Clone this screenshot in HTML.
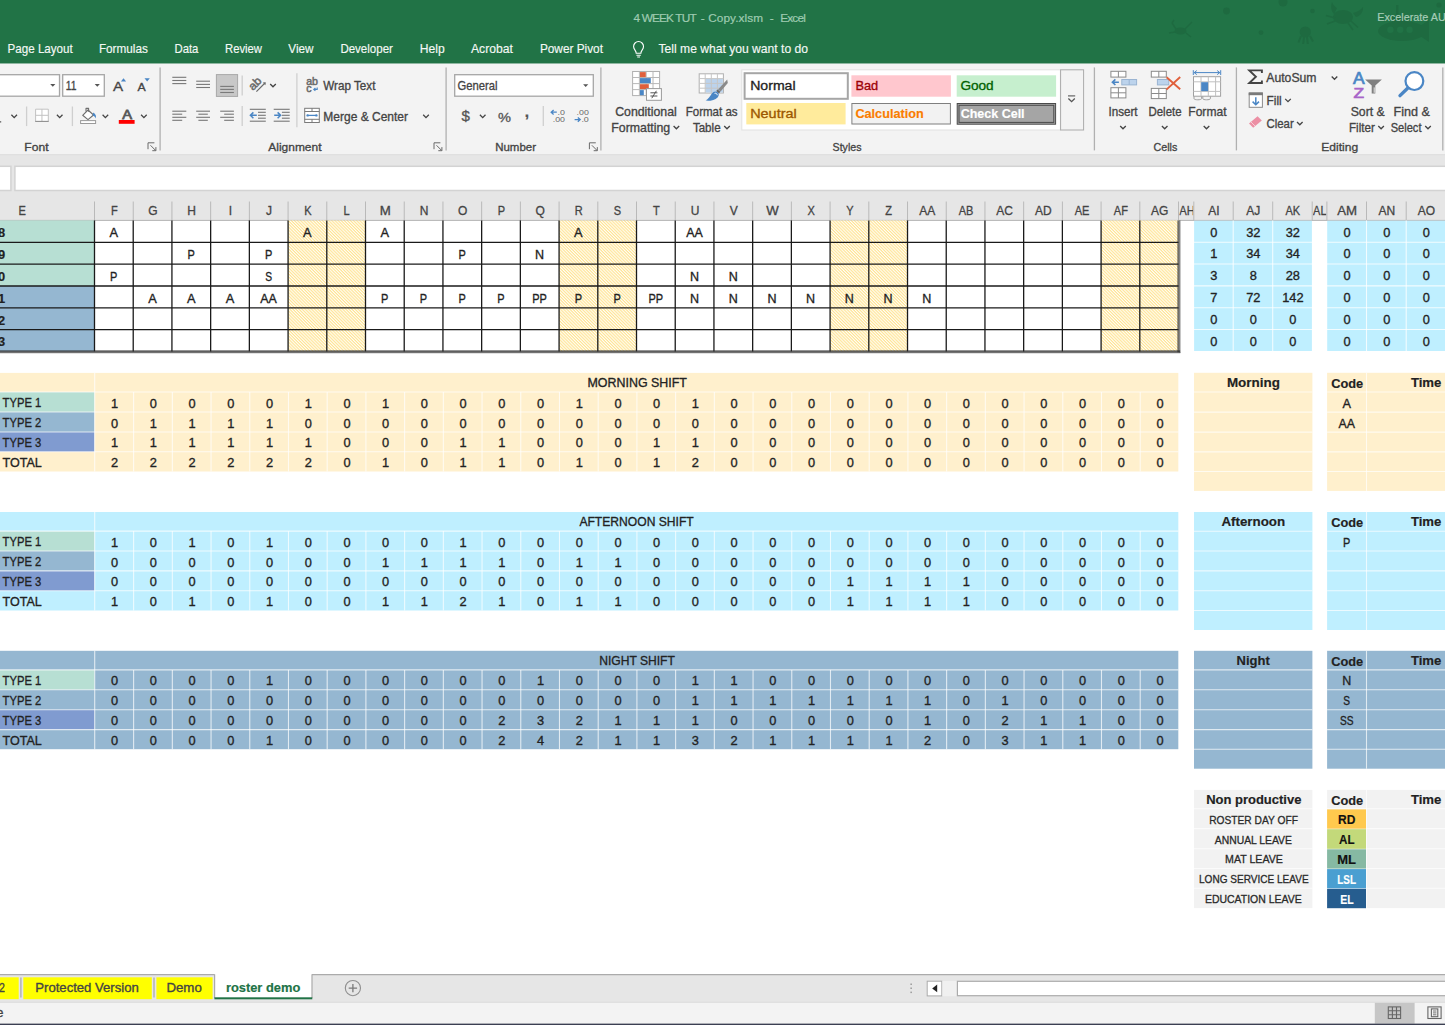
<!DOCTYPE html>
<html lang="en"><head><meta charset="utf-8"><title>4 WEEK TUT - Copy.xlsm - Excel</title>
<style>html,body{margin:0;padding:0;background:#fff;overflow:hidden}svg{display:block;font-family:"Liberation Sans",sans-serif}text{white-space:pre}</style></head>
<body>
<svg width="1445" height="1025" viewBox="0 0 1445 1025">
<rect x="0" y="190.5" width="1445" height="783.7" fill="#fff"/>
<rect x="0" y="190.8" width="1445" height="29.6" fill="#e6e6e6"/>
<line x1="0" y1="220.4" x2="1445" y2="220.4" stroke="#b4b4b4" stroke-width="1"/>
<g font-size="12.5" fill="#444" stroke="#444" stroke-width=".3" text-anchor="middle">
<text x="22.2" y="215.1" transform="translate(22.2 0) scale(0.88 1) translate(-22.2 0)">E</text>
<text x="114.26" y="215.1" transform="translate(114.26 0) scale(0.88 1) translate(-114.26 0)">F</text>
<text x="152.97" y="215.1" transform="translate(152.97 0) scale(0.96 1) translate(-152.97 0)">G</text>
<text x="191.69" y="215.1" transform="translate(191.69 0) scale(0.96 1) translate(-191.69 0)">H</text>
<text x="230.4" y="215.1" transform="translate(230.4 0) scale(0.96 1) translate(-230.4 0)">I</text>
<text x="269.12" y="215.1" transform="translate(269.12 0) scale(0.96 1) translate(-269.12 0)">J</text>
<text x="307.83" y="215.1" transform="translate(307.83 0) scale(0.88 1) translate(-307.83 0)">K</text>
<text x="346.55" y="215.1" transform="translate(346.55 0) scale(0.88 1) translate(-346.55 0)">L</text>
<text x="385.26" y="215.1" transform="translate(385.26 0) scale(1.06 1) translate(-385.26 0)">M</text>
<text x="423.98" y="215.1" transform="translate(423.98 0) scale(0.96 1) translate(-423.98 0)">N</text>
<text x="462.69" y="215.1" transform="translate(462.69 0) scale(0.96 1) translate(-462.69 0)">O</text>
<text x="501.41" y="215.1" transform="translate(501.41 0) scale(0.88 1) translate(-501.41 0)">P</text>
<text x="540.12" y="215.1" transform="translate(540.12 0) scale(0.96 1) translate(-540.12 0)">Q</text>
<text x="578.84" y="215.1" transform="translate(578.84 0) scale(0.88 1) translate(-578.84 0)">R</text>
<text x="617.55" y="215.1" transform="translate(617.55 0) scale(0.88 1) translate(-617.55 0)">S</text>
<text x="656.27" y="215.1" transform="translate(656.27 0) scale(0.88 1) translate(-656.27 0)">T</text>
<text x="694.98" y="215.1" transform="translate(694.98 0) scale(0.96 1) translate(-694.98 0)">U</text>
<text x="733.7" y="215.1" transform="translate(733.7 0) scale(0.96 1) translate(-733.7 0)">V</text>
<text x="772.41" y="215.1" transform="translate(772.41 0) scale(1.06 1) translate(-772.41 0)">W</text>
<text x="811.13" y="215.1" transform="translate(811.13 0) scale(0.88 1) translate(-811.13 0)">X</text>
<text x="849.84" y="215.1" transform="translate(849.84 0) scale(0.88 1) translate(-849.84 0)">Y</text>
<text x="888.56" y="215.1" transform="translate(888.56 0) scale(0.88 1) translate(-888.56 0)">Z</text>
<text x="927.27" y="215.1" transform="translate(927.27 0) scale(0.96 1) translate(-927.27 0)">AA</text>
<text x="965.99" y="215.1" transform="translate(965.99 0) scale(0.88 1) translate(-965.99 0)">AB</text>
<text x="1004.7" y="215.1" transform="translate(1004.7 0) scale(0.96 1) translate(-1004.7 0)">AC</text>
<text x="1043.42" y="215.1" transform="translate(1043.42 0) scale(0.96 1) translate(-1043.42 0)">AD</text>
<text x="1082.13" y="215.1" transform="translate(1082.13 0) scale(0.88 1) translate(-1082.13 0)">AE</text>
<text x="1120.85" y="215.1" transform="translate(1120.85 0) scale(0.88 1) translate(-1120.85 0)">AF</text>
<text x="1159.56" y="215.1" transform="translate(1159.56 0) scale(0.96 1) translate(-1159.56 0)">AG</text>
<text x="1213.9" y="215.1" transform="translate(1213.9 0) scale(0.96 1) translate(-1213.9 0)">AI</text>
<text x="1253.35" y="215.1" transform="translate(1253.35 0) scale(0.96 1) translate(-1253.35 0)">AJ</text>
<text x="1292.85" y="215.1" transform="translate(1292.85 0) scale(0.88 1) translate(-1292.85 0)">AK</text>
<text x="1347.1" y="215.1" transform="translate(1347.1 0) scale(1.06 1) translate(-1347.1 0)">AM</text>
<text x="1386.75" y="215.1" transform="translate(1386.75 0) scale(0.96 1) translate(-1386.75 0)">AN</text>
<text x="1426.4" y="215.1" transform="translate(1426.4 0) scale(0.96 1) translate(-1426.4 0)">AO</text>
</g>
<clipPath id="cAH"><rect x="1179.4" y="200" width="13.8" height="20"/></clipPath>
<clipPath id="cAL"><rect x="1312.8" y="200" width="13.6" height="20"/></clipPath>
<g font-size="12.5" fill="#444" stroke="#444" stroke-width=".3">
<text x="1179.3" y="215.1" textLength="15.6" lengthAdjust="spacingAndGlyphs" clip-path="url(#cAH)">AH</text>
<text x="1313.1" y="215.1" textLength="13.4" lengthAdjust="spacingAndGlyphs" clip-path="url(#cAL)">AL</text>
</g>
<g stroke="#b9b9b9" stroke-width="1">
<line x1="94.5" y1="201.5" x2="94.5" y2="220.4"/>
<line x1="133.22" y1="201.5" x2="133.22" y2="220.4"/>
<line x1="171.93" y1="201.5" x2="171.93" y2="220.4"/>
<line x1="210.65" y1="201.5" x2="210.65" y2="220.4"/>
<line x1="249.36" y1="201.5" x2="249.36" y2="220.4"/>
<line x1="288.08" y1="201.5" x2="288.08" y2="220.4"/>
<line x1="326.79" y1="201.5" x2="326.79" y2="220.4"/>
<line x1="365.5" y1="201.5" x2="365.5" y2="220.4"/>
<line x1="404.22" y1="201.5" x2="404.22" y2="220.4"/>
<line x1="442.94" y1="201.5" x2="442.94" y2="220.4"/>
<line x1="481.65" y1="201.5" x2="481.65" y2="220.4"/>
<line x1="520.37" y1="201.5" x2="520.37" y2="220.4"/>
<line x1="559.08" y1="201.5" x2="559.08" y2="220.4"/>
<line x1="597.8" y1="201.5" x2="597.8" y2="220.4"/>
<line x1="636.51" y1="201.5" x2="636.51" y2="220.4"/>
<line x1="675.23" y1="201.5" x2="675.23" y2="220.4"/>
<line x1="713.94" y1="201.5" x2="713.94" y2="220.4"/>
<line x1="752.66" y1="201.5" x2="752.66" y2="220.4"/>
<line x1="791.37" y1="201.5" x2="791.37" y2="220.4"/>
<line x1="830.09" y1="201.5" x2="830.09" y2="220.4"/>
<line x1="868.8" y1="201.5" x2="868.8" y2="220.4"/>
<line x1="907.52" y1="201.5" x2="907.52" y2="220.4"/>
<line x1="946.23" y1="201.5" x2="946.23" y2="220.4"/>
<line x1="984.95" y1="201.5" x2="984.95" y2="220.4"/>
<line x1="1023.66" y1="201.5" x2="1023.66" y2="220.4"/>
<line x1="1062.38" y1="201.5" x2="1062.38" y2="220.4"/>
<line x1="1101.09" y1="201.5" x2="1101.09" y2="220.4"/>
<line x1="1139.81" y1="201.5" x2="1139.81" y2="220.4"/>
<line x1="1178.52" y1="201.5" x2="1178.52" y2="220.4"/>
<line x1="1193.8" y1="201.5" x2="1193.8" y2="220.4"/>
<line x1="1233.2" y1="201.5" x2="1233.2" y2="220.4"/>
<line x1="1272.7" y1="201.5" x2="1272.7" y2="220.4"/>
<line x1="1312.2" y1="201.5" x2="1312.2" y2="220.4"/>
<line x1="1326.9" y1="201.5" x2="1326.9" y2="220.4"/>
<line x1="1366.5" y1="201.5" x2="1366.5" y2="220.4"/>
<line x1="1406.2" y1="201.5" x2="1406.2" y2="220.4"/>
</g>
<rect x="0" y="220.4" width="94.5" height="65.49" fill="#b7dfd3"/>
<rect x="0" y="285.89" width="94.5" height="65.49" fill="#95b7d1"/>
<defs><pattern id="hat" width="2.2" height="2.2" patternUnits="userSpaceOnUse" patternTransform="rotate(45)"><rect width="2.2" height="2.2" fill="#fffef6"/><rect width="2.2" height="1.1" fill="#ffe392"/></pattern></defs>
<rect x="288.08" y="220.4" width="77.43" height="130.98" fill="url(#hat)"/>
<rect x="559.08" y="220.4" width="77.43" height="130.98" fill="url(#hat)"/>
<rect x="830.09" y="220.4" width="77.43" height="130.98" fill="url(#hat)"/>
<rect x="1101.09" y="220.4" width="77.43" height="130.98" fill="url(#hat)"/>
<g stroke="#1a1a1a" stroke-width="1.3">
<line x1="0" y1="242.33" x2="1178.52" y2="242.33"/>
<line x1="0" y1="264.16" x2="1178.52" y2="264.16"/>
<line x1="0" y1="285.99" x2="1178.52" y2="285.99"/>
<line x1="0" y1="307.82" x2="1178.52" y2="307.82"/>
<line x1="0" y1="329.65" x2="1178.52" y2="329.65"/>
<line x1="94.5" y1="220.4" x2="94.5" y2="351.38"/>
<line x1="133.22" y1="220.4" x2="133.22" y2="351.38"/>
<line x1="171.93" y1="220.4" x2="171.93" y2="351.38"/>
<line x1="210.65" y1="220.4" x2="210.65" y2="351.38"/>
<line x1="249.36" y1="220.4" x2="249.36" y2="351.38"/>
<line x1="288.08" y1="220.4" x2="288.08" y2="351.38"/>
<line x1="326.79" y1="220.4" x2="326.79" y2="351.38"/>
<line x1="365.5" y1="220.4" x2="365.5" y2="351.38"/>
<line x1="404.22" y1="220.4" x2="404.22" y2="351.38"/>
<line x1="442.94" y1="220.4" x2="442.94" y2="351.38"/>
<line x1="481.65" y1="220.4" x2="481.65" y2="351.38"/>
<line x1="520.37" y1="220.4" x2="520.37" y2="351.38"/>
<line x1="559.08" y1="220.4" x2="559.08" y2="351.38"/>
<line x1="597.8" y1="220.4" x2="597.8" y2="351.38"/>
<line x1="636.51" y1="220.4" x2="636.51" y2="351.38"/>
<line x1="675.23" y1="220.4" x2="675.23" y2="351.38"/>
<line x1="713.94" y1="220.4" x2="713.94" y2="351.38"/>
<line x1="752.66" y1="220.4" x2="752.66" y2="351.38"/>
<line x1="791.37" y1="220.4" x2="791.37" y2="351.38"/>
<line x1="830.09" y1="220.4" x2="830.09" y2="351.38"/>
<line x1="868.8" y1="220.4" x2="868.8" y2="351.38"/>
<line x1="907.52" y1="220.4" x2="907.52" y2="351.38"/>
<line x1="946.23" y1="220.4" x2="946.23" y2="351.38"/>
<line x1="984.95" y1="220.4" x2="984.95" y2="351.38"/>
<line x1="1023.66" y1="220.4" x2="1023.66" y2="351.38"/>
<line x1="1062.38" y1="220.4" x2="1062.38" y2="351.38"/>
<line x1="1101.09" y1="220.4" x2="1101.09" y2="351.38"/>
<line x1="1139.81" y1="220.4" x2="1139.81" y2="351.38"/>
</g>
<line x1="1178.12" y1="220.4" x2="1178.12" y2="352.58" stroke="#2a2a2a" stroke-width="1.1"/>
<line x1="1179.82" y1="220.4" x2="1179.82" y2="352.98" stroke="#4a4a4a" stroke-width="1"/>
<line x1="0" y1="351.08" x2="1180.12" y2="351.08" stroke="#2a2a2a" stroke-width="1.2"/>
<line x1="0" y1="352.68" x2="1180.32" y2="352.68" stroke="#555" stroke-width="1"/>
<g font-size="12.9" font-weight="bold" fill="#222" stroke="#222" stroke-width=".15" text-anchor="end">
<text x="5.2" y="237.33">18</text>
<text x="5.2" y="259.16">19</text>
<text x="5.2" y="280.99">20</text>
<text x="5.2" y="302.82">21</text>
<text x="5.2" y="324.65">22</text>
<text x="5.2" y="346.48">23</text>
</g>
<g font-size="12.8" fill="#222" stroke="#222" stroke-width=".32" text-anchor="middle">
<text x="113.76" y="237.43" transform="translate(113.76 0) scale(1 1) translate(-113.76 0)">A</text>
<text x="307.33" y="237.43" transform="translate(307.33 0) scale(1 1) translate(-307.33 0)">A</text>
<text x="384.76" y="237.43" transform="translate(384.76 0) scale(1 1) translate(-384.76 0)">A</text>
<text x="578.34" y="237.43" transform="translate(578.34 0) scale(1 1) translate(-578.34 0)">A</text>
<text x="694.48" y="237.43" transform="translate(694.48 0) scale(0.97 1) translate(-694.48 0)">AA</text>
<text x="191.19" y="259.26" transform="translate(191.19 0) scale(0.86 1) translate(-191.19 0)">P</text>
<text x="268.62" y="259.26" transform="translate(268.62 0) scale(0.86 1) translate(-268.62 0)">P</text>
<text x="462.19" y="259.26" transform="translate(462.19 0) scale(0.86 1) translate(-462.19 0)">P</text>
<text x="539.62" y="259.26" transform="translate(539.62 0) scale(0.98 1) translate(-539.62 0)">N</text>
<text x="113.76" y="281.09" transform="translate(113.76 0) scale(0.86 1) translate(-113.76 0)">P</text>
<text x="268.62" y="281.09" transform="translate(268.62 0) scale(0.8 1) translate(-268.62 0)">S</text>
<text x="694.48" y="281.09" transform="translate(694.48 0) scale(0.98 1) translate(-694.48 0)">N</text>
<text x="733.2" y="281.09" transform="translate(733.2 0) scale(0.98 1) translate(-733.2 0)">N</text>
<text x="152.47" y="302.92" transform="translate(152.47 0) scale(1 1) translate(-152.47 0)">A</text>
<text x="191.19" y="302.92" transform="translate(191.19 0) scale(1 1) translate(-191.19 0)">A</text>
<text x="229.9" y="302.92" transform="translate(229.9 0) scale(1 1) translate(-229.9 0)">A</text>
<text x="268.62" y="302.92" transform="translate(268.62 0) scale(0.97 1) translate(-268.62 0)">AA</text>
<text x="384.76" y="302.92" transform="translate(384.76 0) scale(0.86 1) translate(-384.76 0)">P</text>
<text x="423.48" y="302.92" transform="translate(423.48 0) scale(0.86 1) translate(-423.48 0)">P</text>
<text x="462.19" y="302.92" transform="translate(462.19 0) scale(0.86 1) translate(-462.19 0)">P</text>
<text x="500.91" y="302.92" transform="translate(500.91 0) scale(0.86 1) translate(-500.91 0)">P</text>
<text x="539.62" y="302.92" transform="translate(539.62 0) scale(0.86 1) translate(-539.62 0)">PP</text>
<text x="578.34" y="302.92" transform="translate(578.34 0) scale(0.86 1) translate(-578.34 0)">P</text>
<text x="617.05" y="302.92" transform="translate(617.05 0) scale(0.86 1) translate(-617.05 0)">P</text>
<text x="655.77" y="302.92" transform="translate(655.77 0) scale(0.86 1) translate(-655.77 0)">PP</text>
<text x="694.48" y="302.92" transform="translate(694.48 0) scale(0.98 1) translate(-694.48 0)">N</text>
<text x="733.2" y="302.92" transform="translate(733.2 0) scale(0.98 1) translate(-733.2 0)">N</text>
<text x="771.91" y="302.92" transform="translate(771.91 0) scale(0.98 1) translate(-771.91 0)">N</text>
<text x="810.63" y="302.92" transform="translate(810.63 0) scale(0.98 1) translate(-810.63 0)">N</text>
<text x="849.34" y="302.92" transform="translate(849.34 0) scale(0.98 1) translate(-849.34 0)">N</text>
<text x="888.06" y="302.92" transform="translate(888.06 0) scale(0.98 1) translate(-888.06 0)">N</text>
<text x="926.77" y="302.92" transform="translate(926.77 0) scale(0.98 1) translate(-926.77 0)">N</text>
</g>
<rect x="1194.1" y="220.7" width="117.8" height="130.28" fill="#bfefff"/>
<rect x="1327.2" y="220.7" width="118.5" height="130.28" fill="#bfefff"/>
<g stroke="#fff" stroke-width="1.1" stroke-opacity=".8">
<line x1="1193.8" y1="242.23" x2="1312.2" y2="242.23"/>
<line x1="1326.9" y1="242.23" x2="1445" y2="242.23"/>
<line x1="1193.8" y1="264.06" x2="1312.2" y2="264.06"/>
<line x1="1326.9" y1="264.06" x2="1445" y2="264.06"/>
<line x1="1193.8" y1="285.89" x2="1312.2" y2="285.89"/>
<line x1="1326.9" y1="285.89" x2="1445" y2="285.89"/>
<line x1="1193.8" y1="307.72" x2="1312.2" y2="307.72"/>
<line x1="1326.9" y1="307.72" x2="1445" y2="307.72"/>
<line x1="1193.8" y1="329.55" x2="1312.2" y2="329.55"/>
<line x1="1326.9" y1="329.55" x2="1445" y2="329.55"/>
<line x1="1233.2" y1="220.4" x2="1233.2" y2="351.38"/>
<line x1="1272.7" y1="220.4" x2="1272.7" y2="351.38"/>
<line x1="1366.5" y1="220.4" x2="1366.5" y2="351.38"/>
<line x1="1406.2" y1="220.4" x2="1406.2" y2="351.38"/>
</g>
<g font-size="12.8" fill="#222" stroke="#222" stroke-width=".32" text-anchor="middle">
<text x="1213.9" y="236.53">0</text>
<text x="1253.35" y="236.53">32</text>
<text x="1292.85" y="236.53">32</text>
<text x="1347.1" y="236.53">0</text>
<text x="1386.75" y="236.53">0</text>
<text x="1426.4" y="236.53">0</text>
<text x="1213.9" y="258.36">1</text>
<text x="1253.35" y="258.36">34</text>
<text x="1292.85" y="258.36">34</text>
<text x="1347.1" y="258.36">0</text>
<text x="1386.75" y="258.36">0</text>
<text x="1426.4" y="258.36">0</text>
<text x="1213.9" y="280.19">3</text>
<text x="1253.35" y="280.19">8</text>
<text x="1292.85" y="280.19">28</text>
<text x="1347.1" y="280.19">0</text>
<text x="1386.75" y="280.19">0</text>
<text x="1426.4" y="280.19">0</text>
<text x="1213.9" y="302.02">7</text>
<text x="1253.35" y="302.02">72</text>
<text x="1292.85" y="302.02">142</text>
<text x="1347.1" y="302.02">0</text>
<text x="1386.75" y="302.02">0</text>
<text x="1426.4" y="302.02">0</text>
<text x="1213.9" y="323.85">0</text>
<text x="1253.35" y="323.85">0</text>
<text x="1292.85" y="323.85">0</text>
<text x="1347.1" y="323.85">0</text>
<text x="1386.75" y="323.85">0</text>
<text x="1426.4" y="323.85">0</text>
<text x="1213.9" y="345.68">0</text>
<text x="1253.35" y="345.68">0</text>
<text x="1292.85" y="345.68">0</text>
<text x="1347.1" y="345.68">0</text>
<text x="1386.75" y="345.68">0</text>
<text x="1426.4" y="345.68">0</text>
</g>
<rect x="0" y="372.9" width="1178.32" height="98.6" fill="#fff0cd"/>
<rect x="0" y="392" width="94.5" height="20" fill="#b7dfd3"/>
<rect x="0" y="412" width="94.5" height="20" fill="#95b7d1"/>
<rect x="0" y="432" width="94.5" height="19.8" fill="#809bd0"/>
<g stroke="#fff" stroke-width="1.1" stroke-opacity=".72">
<line x1="0" y1="392" x2="1178.52" y2="392"/>
<line x1="0" y1="412" x2="1178.52" y2="412"/>
<line x1="0" y1="432" x2="1178.52" y2="432"/>
<line x1="0" y1="451.8" x2="1178.52" y2="451.8"/>
<line x1="94.7" y1="372.9" x2="94.7" y2="471.5"/>
<line x1="133.62" y1="392" x2="133.62" y2="471.5"/>
<line x1="172.33" y1="392" x2="172.33" y2="471.5"/>
<line x1="211.05" y1="392" x2="211.05" y2="471.5"/>
<line x1="249.76" y1="392" x2="249.76" y2="471.5"/>
<line x1="288.48" y1="392" x2="288.48" y2="471.5"/>
<line x1="327.19" y1="392" x2="327.19" y2="471.5"/>
<line x1="365.9" y1="392" x2="365.9" y2="471.5"/>
<line x1="404.62" y1="392" x2="404.62" y2="471.5"/>
<line x1="443.34" y1="392" x2="443.34" y2="471.5"/>
<line x1="482.05" y1="392" x2="482.05" y2="471.5"/>
<line x1="520.76" y1="392" x2="520.76" y2="471.5"/>
<line x1="559.48" y1="392" x2="559.48" y2="471.5"/>
<line x1="598.2" y1="392" x2="598.2" y2="471.5"/>
<line x1="636.91" y1="392" x2="636.91" y2="471.5"/>
<line x1="675.62" y1="392" x2="675.62" y2="471.5"/>
<line x1="714.34" y1="392" x2="714.34" y2="471.5"/>
<line x1="753.06" y1="392" x2="753.06" y2="471.5"/>
<line x1="791.77" y1="392" x2="791.77" y2="471.5"/>
<line x1="830.49" y1="392" x2="830.49" y2="471.5"/>
<line x1="869.2" y1="392" x2="869.2" y2="471.5"/>
<line x1="907.92" y1="392" x2="907.92" y2="471.5"/>
<line x1="946.63" y1="392" x2="946.63" y2="471.5"/>
<line x1="985.35" y1="392" x2="985.35" y2="471.5"/>
<line x1="1024.06" y1="392" x2="1024.06" y2="471.5"/>
<line x1="1062.78" y1="392" x2="1062.78" y2="471.5"/>
<line x1="1101.49" y1="392" x2="1101.49" y2="471.5"/>
<line x1="1140.21" y1="392" x2="1140.21" y2="471.5"/>
</g>
<text x="587.5" y="387.1" font-size="12.7" fill="#222" stroke="#222" stroke-width="0.32" textLength="99.4" lengthAdjust="spacingAndGlyphs">MORNING SHIFT</text>
<g font-size="12.9" fill="#222" stroke="#222" stroke-width=".32">
<text x="2.6" y="407.4" textLength="38.6" lengthAdjust="spacingAndGlyphs">TYPE 1</text>
<text x="2.6" y="427.4" textLength="38.6" lengthAdjust="spacingAndGlyphs">TYPE 2</text>
<text x="2.6" y="447.2" textLength="38.6" lengthAdjust="spacingAndGlyphs">TYPE 3</text>
<text x="2.6" y="466.9" textLength="39.2" lengthAdjust="spacingAndGlyphs">TOTAL</text>
</g>
<g font-size="12.8" fill="#222" stroke="#222" stroke-width=".32" text-anchor="middle">
<text x="114.66" y="407.6">1</text>
<text x="153.37" y="407.6">0</text>
<text x="192.09" y="407.6">0</text>
<text x="230.8" y="407.6">0</text>
<text x="269.52" y="407.6">0</text>
<text x="308.23" y="407.6">1</text>
<text x="346.95" y="407.6">0</text>
<text x="385.66" y="407.6">1</text>
<text x="424.38" y="407.6">0</text>
<text x="463.09" y="407.6">0</text>
<text x="501.81" y="407.6">0</text>
<text x="540.52" y="407.6">0</text>
<text x="579.24" y="407.6">1</text>
<text x="617.95" y="407.6">0</text>
<text x="656.67" y="407.6">0</text>
<text x="695.38" y="407.6">1</text>
<text x="734.1" y="407.6">0</text>
<text x="772.81" y="407.6">0</text>
<text x="811.53" y="407.6">0</text>
<text x="850.24" y="407.6">0</text>
<text x="888.96" y="407.6">0</text>
<text x="927.67" y="407.6">0</text>
<text x="966.39" y="407.6">0</text>
<text x="1005.1" y="407.6">0</text>
<text x="1043.82" y="407.6">0</text>
<text x="1082.53" y="407.6">0</text>
<text x="1121.25" y="407.6">0</text>
<text x="1159.96" y="407.6">0</text>
<text x="114.66" y="427.6">0</text>
<text x="153.37" y="427.6">1</text>
<text x="192.09" y="427.6">1</text>
<text x="230.8" y="427.6">1</text>
<text x="269.52" y="427.6">1</text>
<text x="308.23" y="427.6">0</text>
<text x="346.95" y="427.6">0</text>
<text x="385.66" y="427.6">0</text>
<text x="424.38" y="427.6">0</text>
<text x="463.09" y="427.6">0</text>
<text x="501.81" y="427.6">0</text>
<text x="540.52" y="427.6">0</text>
<text x="579.24" y="427.6">0</text>
<text x="617.95" y="427.6">0</text>
<text x="656.67" y="427.6">0</text>
<text x="695.38" y="427.6">0</text>
<text x="734.1" y="427.6">0</text>
<text x="772.81" y="427.6">0</text>
<text x="811.53" y="427.6">0</text>
<text x="850.24" y="427.6">0</text>
<text x="888.96" y="427.6">0</text>
<text x="927.67" y="427.6">0</text>
<text x="966.39" y="427.6">0</text>
<text x="1005.1" y="427.6">0</text>
<text x="1043.82" y="427.6">0</text>
<text x="1082.53" y="427.6">0</text>
<text x="1121.25" y="427.6">0</text>
<text x="1159.96" y="427.6">0</text>
<text x="114.66" y="447.4">1</text>
<text x="153.37" y="447.4">1</text>
<text x="192.09" y="447.4">1</text>
<text x="230.8" y="447.4">1</text>
<text x="269.52" y="447.4">1</text>
<text x="308.23" y="447.4">1</text>
<text x="346.95" y="447.4">0</text>
<text x="385.66" y="447.4">0</text>
<text x="424.38" y="447.4">0</text>
<text x="463.09" y="447.4">1</text>
<text x="501.81" y="447.4">1</text>
<text x="540.52" y="447.4">0</text>
<text x="579.24" y="447.4">0</text>
<text x="617.95" y="447.4">0</text>
<text x="656.67" y="447.4">1</text>
<text x="695.38" y="447.4">1</text>
<text x="734.1" y="447.4">0</text>
<text x="772.81" y="447.4">0</text>
<text x="811.53" y="447.4">0</text>
<text x="850.24" y="447.4">0</text>
<text x="888.96" y="447.4">0</text>
<text x="927.67" y="447.4">0</text>
<text x="966.39" y="447.4">0</text>
<text x="1005.1" y="447.4">0</text>
<text x="1043.82" y="447.4">0</text>
<text x="1082.53" y="447.4">0</text>
<text x="1121.25" y="447.4">0</text>
<text x="1159.96" y="447.4">0</text>
<text x="114.66" y="467.1">2</text>
<text x="153.37" y="467.1">2</text>
<text x="192.09" y="467.1">2</text>
<text x="230.8" y="467.1">2</text>
<text x="269.52" y="467.1">2</text>
<text x="308.23" y="467.1">2</text>
<text x="346.95" y="467.1">0</text>
<text x="385.66" y="467.1">1</text>
<text x="424.38" y="467.1">0</text>
<text x="463.09" y="467.1">1</text>
<text x="501.81" y="467.1">1</text>
<text x="540.52" y="467.1">0</text>
<text x="579.24" y="467.1">1</text>
<text x="617.95" y="467.1">0</text>
<text x="656.67" y="467.1">1</text>
<text x="695.38" y="467.1">2</text>
<text x="734.1" y="467.1">0</text>
<text x="772.81" y="467.1">0</text>
<text x="811.53" y="467.1">0</text>
<text x="850.24" y="467.1">0</text>
<text x="888.96" y="467.1">0</text>
<text x="927.67" y="467.1">0</text>
<text x="966.39" y="467.1">0</text>
<text x="1005.1" y="467.1">0</text>
<text x="1043.82" y="467.1">0</text>
<text x="1082.53" y="467.1">0</text>
<text x="1121.25" y="467.1">0</text>
<text x="1159.96" y="467.1">0</text>
</g>
<rect x="0" y="512" width="1178.32" height="98.5" fill="#bfefff"/>
<rect x="0" y="531.1" width="94.5" height="19.9" fill="#b7dfd3"/>
<rect x="0" y="551" width="94.5" height="19.9" fill="#95b7d1"/>
<rect x="0" y="570.9" width="94.5" height="19.9" fill="#809bd0"/>
<g stroke="#fff" stroke-width="1.1" stroke-opacity=".72">
<line x1="0" y1="531.1" x2="1178.52" y2="531.1"/>
<line x1="0" y1="551" x2="1178.52" y2="551"/>
<line x1="0" y1="570.9" x2="1178.52" y2="570.9"/>
<line x1="0" y1="590.8" x2="1178.52" y2="590.8"/>
<line x1="94.7" y1="512" x2="94.7" y2="610.5"/>
<line x1="133.62" y1="531.1" x2="133.62" y2="610.5"/>
<line x1="172.33" y1="531.1" x2="172.33" y2="610.5"/>
<line x1="211.05" y1="531.1" x2="211.05" y2="610.5"/>
<line x1="249.76" y1="531.1" x2="249.76" y2="610.5"/>
<line x1="288.48" y1="531.1" x2="288.48" y2="610.5"/>
<line x1="327.19" y1="531.1" x2="327.19" y2="610.5"/>
<line x1="365.9" y1="531.1" x2="365.9" y2="610.5"/>
<line x1="404.62" y1="531.1" x2="404.62" y2="610.5"/>
<line x1="443.34" y1="531.1" x2="443.34" y2="610.5"/>
<line x1="482.05" y1="531.1" x2="482.05" y2="610.5"/>
<line x1="520.76" y1="531.1" x2="520.76" y2="610.5"/>
<line x1="559.48" y1="531.1" x2="559.48" y2="610.5"/>
<line x1="598.2" y1="531.1" x2="598.2" y2="610.5"/>
<line x1="636.91" y1="531.1" x2="636.91" y2="610.5"/>
<line x1="675.62" y1="531.1" x2="675.62" y2="610.5"/>
<line x1="714.34" y1="531.1" x2="714.34" y2="610.5"/>
<line x1="753.06" y1="531.1" x2="753.06" y2="610.5"/>
<line x1="791.77" y1="531.1" x2="791.77" y2="610.5"/>
<line x1="830.49" y1="531.1" x2="830.49" y2="610.5"/>
<line x1="869.2" y1="531.1" x2="869.2" y2="610.5"/>
<line x1="907.92" y1="531.1" x2="907.92" y2="610.5"/>
<line x1="946.63" y1="531.1" x2="946.63" y2="610.5"/>
<line x1="985.35" y1="531.1" x2="985.35" y2="610.5"/>
<line x1="1024.06" y1="531.1" x2="1024.06" y2="610.5"/>
<line x1="1062.78" y1="531.1" x2="1062.78" y2="610.5"/>
<line x1="1101.49" y1="531.1" x2="1101.49" y2="610.5"/>
<line x1="1140.21" y1="531.1" x2="1140.21" y2="610.5"/>
</g>
<text x="579.4" y="526.2" font-size="12.7" fill="#222" stroke="#222" stroke-width="0.32" textLength="114.3" lengthAdjust="spacingAndGlyphs">AFTERNOON SHIFT</text>
<g font-size="12.9" fill="#222" stroke="#222" stroke-width=".32">
<text x="2.6" y="546.4" textLength="38.6" lengthAdjust="spacingAndGlyphs">TYPE 1</text>
<text x="2.6" y="566.3" textLength="38.6" lengthAdjust="spacingAndGlyphs">TYPE 2</text>
<text x="2.6" y="586.2" textLength="38.6" lengthAdjust="spacingAndGlyphs">TYPE 3</text>
<text x="2.6" y="605.9" textLength="39.2" lengthAdjust="spacingAndGlyphs">TOTAL</text>
</g>
<g font-size="12.8" fill="#222" stroke="#222" stroke-width=".32" text-anchor="middle">
<text x="114.66" y="546.6">1</text>
<text x="153.37" y="546.6">0</text>
<text x="192.09" y="546.6">1</text>
<text x="230.8" y="546.6">0</text>
<text x="269.52" y="546.6">1</text>
<text x="308.23" y="546.6">0</text>
<text x="346.95" y="546.6">0</text>
<text x="385.66" y="546.6">0</text>
<text x="424.38" y="546.6">0</text>
<text x="463.09" y="546.6">1</text>
<text x="501.81" y="546.6">0</text>
<text x="540.52" y="546.6">0</text>
<text x="579.24" y="546.6">0</text>
<text x="617.95" y="546.6">0</text>
<text x="656.67" y="546.6">0</text>
<text x="695.38" y="546.6">0</text>
<text x="734.1" y="546.6">0</text>
<text x="772.81" y="546.6">0</text>
<text x="811.53" y="546.6">0</text>
<text x="850.24" y="546.6">0</text>
<text x="888.96" y="546.6">0</text>
<text x="927.67" y="546.6">0</text>
<text x="966.39" y="546.6">0</text>
<text x="1005.1" y="546.6">0</text>
<text x="1043.82" y="546.6">0</text>
<text x="1082.53" y="546.6">0</text>
<text x="1121.25" y="546.6">0</text>
<text x="1159.96" y="546.6">0</text>
<text x="114.66" y="566.5">0</text>
<text x="153.37" y="566.5">0</text>
<text x="192.09" y="566.5">0</text>
<text x="230.8" y="566.5">0</text>
<text x="269.52" y="566.5">0</text>
<text x="308.23" y="566.5">0</text>
<text x="346.95" y="566.5">0</text>
<text x="385.66" y="566.5">1</text>
<text x="424.38" y="566.5">1</text>
<text x="463.09" y="566.5">1</text>
<text x="501.81" y="566.5">1</text>
<text x="540.52" y="566.5">0</text>
<text x="579.24" y="566.5">1</text>
<text x="617.95" y="566.5">1</text>
<text x="656.67" y="566.5">0</text>
<text x="695.38" y="566.5">0</text>
<text x="734.1" y="566.5">0</text>
<text x="772.81" y="566.5">0</text>
<text x="811.53" y="566.5">0</text>
<text x="850.24" y="566.5">0</text>
<text x="888.96" y="566.5">0</text>
<text x="927.67" y="566.5">0</text>
<text x="966.39" y="566.5">0</text>
<text x="1005.1" y="566.5">0</text>
<text x="1043.82" y="566.5">0</text>
<text x="1082.53" y="566.5">0</text>
<text x="1121.25" y="566.5">0</text>
<text x="1159.96" y="566.5">0</text>
<text x="114.66" y="586.4">0</text>
<text x="153.37" y="586.4">0</text>
<text x="192.09" y="586.4">0</text>
<text x="230.8" y="586.4">0</text>
<text x="269.52" y="586.4">0</text>
<text x="308.23" y="586.4">0</text>
<text x="346.95" y="586.4">0</text>
<text x="385.66" y="586.4">0</text>
<text x="424.38" y="586.4">0</text>
<text x="463.09" y="586.4">0</text>
<text x="501.81" y="586.4">0</text>
<text x="540.52" y="586.4">0</text>
<text x="579.24" y="586.4">0</text>
<text x="617.95" y="586.4">0</text>
<text x="656.67" y="586.4">0</text>
<text x="695.38" y="586.4">0</text>
<text x="734.1" y="586.4">0</text>
<text x="772.81" y="586.4">0</text>
<text x="811.53" y="586.4">0</text>
<text x="850.24" y="586.4">1</text>
<text x="888.96" y="586.4">1</text>
<text x="927.67" y="586.4">1</text>
<text x="966.39" y="586.4">1</text>
<text x="1005.1" y="586.4">0</text>
<text x="1043.82" y="586.4">0</text>
<text x="1082.53" y="586.4">0</text>
<text x="1121.25" y="586.4">0</text>
<text x="1159.96" y="586.4">0</text>
<text x="114.66" y="606.1">1</text>
<text x="153.37" y="606.1">0</text>
<text x="192.09" y="606.1">1</text>
<text x="230.8" y="606.1">0</text>
<text x="269.52" y="606.1">1</text>
<text x="308.23" y="606.1">0</text>
<text x="346.95" y="606.1">0</text>
<text x="385.66" y="606.1">1</text>
<text x="424.38" y="606.1">1</text>
<text x="463.09" y="606.1">2</text>
<text x="501.81" y="606.1">1</text>
<text x="540.52" y="606.1">0</text>
<text x="579.24" y="606.1">1</text>
<text x="617.95" y="606.1">1</text>
<text x="656.67" y="606.1">0</text>
<text x="695.38" y="606.1">0</text>
<text x="734.1" y="606.1">0</text>
<text x="772.81" y="606.1">0</text>
<text x="811.53" y="606.1">0</text>
<text x="850.24" y="606.1">1</text>
<text x="888.96" y="606.1">1</text>
<text x="927.67" y="606.1">1</text>
<text x="966.39" y="606.1">1</text>
<text x="1005.1" y="606.1">0</text>
<text x="1043.82" y="606.1">0</text>
<text x="1082.53" y="606.1">0</text>
<text x="1121.25" y="606.1">0</text>
<text x="1159.96" y="606.1">0</text>
</g>
<rect x="0" y="650.8" width="1178.32" height="98.4" fill="#95b7d1"/>
<rect x="0" y="669.9" width="94.5" height="19.9" fill="#b7dfd3"/>
<rect x="0" y="689.8" width="94.5" height="19.9" fill="#95b7d1"/>
<rect x="0" y="709.7" width="94.5" height="19.9" fill="#809bd0"/>
<g stroke="#fff" stroke-width="1.1" stroke-opacity=".72">
<line x1="0" y1="669.9" x2="1178.52" y2="669.9"/>
<line x1="0" y1="689.8" x2="1178.52" y2="689.8"/>
<line x1="0" y1="709.7" x2="1178.52" y2="709.7"/>
<line x1="0" y1="729.6" x2="1178.52" y2="729.6"/>
<line x1="94.7" y1="650.8" x2="94.7" y2="749.2"/>
<line x1="133.62" y1="669.9" x2="133.62" y2="749.2"/>
<line x1="172.33" y1="669.9" x2="172.33" y2="749.2"/>
<line x1="211.05" y1="669.9" x2="211.05" y2="749.2"/>
<line x1="249.76" y1="669.9" x2="249.76" y2="749.2"/>
<line x1="288.48" y1="669.9" x2="288.48" y2="749.2"/>
<line x1="327.19" y1="669.9" x2="327.19" y2="749.2"/>
<line x1="365.9" y1="669.9" x2="365.9" y2="749.2"/>
<line x1="404.62" y1="669.9" x2="404.62" y2="749.2"/>
<line x1="443.34" y1="669.9" x2="443.34" y2="749.2"/>
<line x1="482.05" y1="669.9" x2="482.05" y2="749.2"/>
<line x1="520.76" y1="669.9" x2="520.76" y2="749.2"/>
<line x1="559.48" y1="669.9" x2="559.48" y2="749.2"/>
<line x1="598.2" y1="669.9" x2="598.2" y2="749.2"/>
<line x1="636.91" y1="669.9" x2="636.91" y2="749.2"/>
<line x1="675.62" y1="669.9" x2="675.62" y2="749.2"/>
<line x1="714.34" y1="669.9" x2="714.34" y2="749.2"/>
<line x1="753.06" y1="669.9" x2="753.06" y2="749.2"/>
<line x1="791.77" y1="669.9" x2="791.77" y2="749.2"/>
<line x1="830.49" y1="669.9" x2="830.49" y2="749.2"/>
<line x1="869.2" y1="669.9" x2="869.2" y2="749.2"/>
<line x1="907.92" y1="669.9" x2="907.92" y2="749.2"/>
<line x1="946.63" y1="669.9" x2="946.63" y2="749.2"/>
<line x1="985.35" y1="669.9" x2="985.35" y2="749.2"/>
<line x1="1024.06" y1="669.9" x2="1024.06" y2="749.2"/>
<line x1="1062.78" y1="669.9" x2="1062.78" y2="749.2"/>
<line x1="1101.49" y1="669.9" x2="1101.49" y2="749.2"/>
<line x1="1140.21" y1="669.9" x2="1140.21" y2="749.2"/>
</g>
<text x="599.2" y="665" font-size="12.7" fill="#222" stroke="#222" stroke-width="0.32" textLength="75.7" lengthAdjust="spacingAndGlyphs">NIGHT SHIFT</text>
<g font-size="12.9" fill="#222" stroke="#222" stroke-width=".32">
<text x="2.6" y="685.2" textLength="38.6" lengthAdjust="spacingAndGlyphs">TYPE 1</text>
<text x="2.6" y="705.1" textLength="38.6" lengthAdjust="spacingAndGlyphs">TYPE 2</text>
<text x="2.6" y="725" textLength="38.6" lengthAdjust="spacingAndGlyphs">TYPE 3</text>
<text x="2.6" y="744.6" textLength="39.2" lengthAdjust="spacingAndGlyphs">TOTAL</text>
</g>
<g font-size="12.8" fill="#222" stroke="#222" stroke-width=".32" text-anchor="middle">
<text x="114.66" y="685.4">0</text>
<text x="153.37" y="685.4">0</text>
<text x="192.09" y="685.4">0</text>
<text x="230.8" y="685.4">0</text>
<text x="269.52" y="685.4">1</text>
<text x="308.23" y="685.4">0</text>
<text x="346.95" y="685.4">0</text>
<text x="385.66" y="685.4">0</text>
<text x="424.38" y="685.4">0</text>
<text x="463.09" y="685.4">0</text>
<text x="501.81" y="685.4">0</text>
<text x="540.52" y="685.4">1</text>
<text x="579.24" y="685.4">0</text>
<text x="617.95" y="685.4">0</text>
<text x="656.67" y="685.4">0</text>
<text x="695.38" y="685.4">1</text>
<text x="734.1" y="685.4">1</text>
<text x="772.81" y="685.4">0</text>
<text x="811.53" y="685.4">0</text>
<text x="850.24" y="685.4">0</text>
<text x="888.96" y="685.4">0</text>
<text x="927.67" y="685.4">0</text>
<text x="966.39" y="685.4">0</text>
<text x="1005.1" y="685.4">0</text>
<text x="1043.82" y="685.4">0</text>
<text x="1082.53" y="685.4">0</text>
<text x="1121.25" y="685.4">0</text>
<text x="1159.96" y="685.4">0</text>
<text x="114.66" y="705.3">0</text>
<text x="153.37" y="705.3">0</text>
<text x="192.09" y="705.3">0</text>
<text x="230.8" y="705.3">0</text>
<text x="269.52" y="705.3">0</text>
<text x="308.23" y="705.3">0</text>
<text x="346.95" y="705.3">0</text>
<text x="385.66" y="705.3">0</text>
<text x="424.38" y="705.3">0</text>
<text x="463.09" y="705.3">0</text>
<text x="501.81" y="705.3">0</text>
<text x="540.52" y="705.3">0</text>
<text x="579.24" y="705.3">0</text>
<text x="617.95" y="705.3">0</text>
<text x="656.67" y="705.3">0</text>
<text x="695.38" y="705.3">1</text>
<text x="734.1" y="705.3">1</text>
<text x="772.81" y="705.3">1</text>
<text x="811.53" y="705.3">1</text>
<text x="850.24" y="705.3">1</text>
<text x="888.96" y="705.3">1</text>
<text x="927.67" y="705.3">1</text>
<text x="966.39" y="705.3">0</text>
<text x="1005.1" y="705.3">1</text>
<text x="1043.82" y="705.3">0</text>
<text x="1082.53" y="705.3">0</text>
<text x="1121.25" y="705.3">0</text>
<text x="1159.96" y="705.3">0</text>
<text x="114.66" y="725.2">0</text>
<text x="153.37" y="725.2">0</text>
<text x="192.09" y="725.2">0</text>
<text x="230.8" y="725.2">0</text>
<text x="269.52" y="725.2">0</text>
<text x="308.23" y="725.2">0</text>
<text x="346.95" y="725.2">0</text>
<text x="385.66" y="725.2">0</text>
<text x="424.38" y="725.2">0</text>
<text x="463.09" y="725.2">0</text>
<text x="501.81" y="725.2">2</text>
<text x="540.52" y="725.2">3</text>
<text x="579.24" y="725.2">2</text>
<text x="617.95" y="725.2">1</text>
<text x="656.67" y="725.2">1</text>
<text x="695.38" y="725.2">1</text>
<text x="734.1" y="725.2">0</text>
<text x="772.81" y="725.2">0</text>
<text x="811.53" y="725.2">0</text>
<text x="850.24" y="725.2">0</text>
<text x="888.96" y="725.2">0</text>
<text x="927.67" y="725.2">1</text>
<text x="966.39" y="725.2">0</text>
<text x="1005.1" y="725.2">2</text>
<text x="1043.82" y="725.2">1</text>
<text x="1082.53" y="725.2">1</text>
<text x="1121.25" y="725.2">0</text>
<text x="1159.96" y="725.2">0</text>
<text x="114.66" y="744.8">0</text>
<text x="153.37" y="744.8">0</text>
<text x="192.09" y="744.8">0</text>
<text x="230.8" y="744.8">0</text>
<text x="269.52" y="744.8">1</text>
<text x="308.23" y="744.8">0</text>
<text x="346.95" y="744.8">0</text>
<text x="385.66" y="744.8">0</text>
<text x="424.38" y="744.8">0</text>
<text x="463.09" y="744.8">0</text>
<text x="501.81" y="744.8">2</text>
<text x="540.52" y="744.8">4</text>
<text x="579.24" y="744.8">2</text>
<text x="617.95" y="744.8">1</text>
<text x="656.67" y="744.8">1</text>
<text x="695.38" y="744.8">3</text>
<text x="734.1" y="744.8">2</text>
<text x="772.81" y="744.8">1</text>
<text x="811.53" y="744.8">1</text>
<text x="850.24" y="744.8">1</text>
<text x="888.96" y="744.8">1</text>
<text x="927.67" y="744.8">2</text>
<text x="966.39" y="744.8">0</text>
<text x="1005.1" y="744.8">3</text>
<text x="1043.82" y="744.8">1</text>
<text x="1082.53" y="744.8">1</text>
<text x="1121.25" y="744.8">0</text>
<text x="1159.96" y="744.8">0</text>
</g>
<rect x="1194" y="372.8" width="118.4" height="118.1" fill="#fff0cd"/>
<rect x="1327.1" y="372.8" width="118.9" height="118.1" fill="#fff0cd"/>
<g stroke="#fff" stroke-width="1.1" stroke-opacity=".7">
<line x1="1194" y1="392" x2="1312.4" y2="392"/>
<line x1="1327.1" y1="392" x2="1445" y2="392"/>
<line x1="1194" y1="412.1" x2="1312.4" y2="412.1"/>
<line x1="1327.1" y1="412.1" x2="1445" y2="412.1"/>
<line x1="1194" y1="432.1" x2="1312.4" y2="432.1"/>
<line x1="1327.1" y1="432.1" x2="1445" y2="432.1"/>
<line x1="1194" y1="451.9" x2="1312.4" y2="451.9"/>
<line x1="1327.1" y1="451.9" x2="1445" y2="451.9"/>
<line x1="1194" y1="471.5" x2="1312.4" y2="471.5"/>
<line x1="1327.1" y1="471.5" x2="1445" y2="471.5"/>
<line x1="1366.5" y1="372.8" x2="1366.5" y2="490.9"/>
</g>
<text x="1226.9" y="387" font-size="12.7" fill="#222" stroke="#222" stroke-width="0.16" font-weight="bold" textLength="53" lengthAdjust="spacingAndGlyphs">Morning</text>
<text x="1331.2" y="387.8" font-size="12.7" fill="#222" stroke="#222" stroke-width="0.16" font-weight="bold" textLength="32" lengthAdjust="spacingAndGlyphs">Code</text>
<text x="1410.9" y="387" font-size="12.7" fill="#222" stroke="#222" stroke-width="0.16" font-weight="bold" textLength="30.5" lengthAdjust="spacingAndGlyphs">Time</text>
<text x="1346.7" y="407.8" font-size="12.7" fill="#222" stroke="#222" stroke-width="0.32" text-anchor="middle" transform="translate(1346.7 0) scale(1 1) translate(-1346.7 0)">A</text>
<text x="1346.7" y="427.8" font-size="12.7" fill="#222" stroke="#222" stroke-width="0.32" text-anchor="middle" transform="translate(1346.7 0) scale(0.97 1) translate(-1346.7 0)">AA</text>
<rect x="1194" y="512" width="118.4" height="118" fill="#bfefff"/>
<rect x="1327.1" y="512" width="118.9" height="118" fill="#bfefff"/>
<g stroke="#fff" stroke-width="1.1" stroke-opacity=".7">
<line x1="1194" y1="531.2" x2="1312.4" y2="531.2"/>
<line x1="1327.1" y1="531.2" x2="1445" y2="531.2"/>
<line x1="1194" y1="551" x2="1312.4" y2="551"/>
<line x1="1327.1" y1="551" x2="1445" y2="551"/>
<line x1="1194" y1="570.9" x2="1312.4" y2="570.9"/>
<line x1="1327.1" y1="570.9" x2="1445" y2="570.9"/>
<line x1="1194" y1="590.8" x2="1312.4" y2="590.8"/>
<line x1="1327.1" y1="590.8" x2="1445" y2="590.8"/>
<line x1="1194" y1="610.5" x2="1312.4" y2="610.5"/>
<line x1="1327.1" y1="610.5" x2="1445" y2="610.5"/>
<line x1="1366.5" y1="512" x2="1366.5" y2="630"/>
</g>
<text x="1221.4" y="526.2" font-size="12.7" fill="#222" stroke="#222" stroke-width="0.16" font-weight="bold" textLength="63.8" lengthAdjust="spacingAndGlyphs">Afternoon</text>
<text x="1331.2" y="527" font-size="12.7" fill="#222" stroke="#222" stroke-width="0.16" font-weight="bold" textLength="32" lengthAdjust="spacingAndGlyphs">Code</text>
<text x="1410.9" y="526.2" font-size="12.7" fill="#222" stroke="#222" stroke-width="0.16" font-weight="bold" textLength="30.5" lengthAdjust="spacingAndGlyphs">Time</text>
<text x="1346.7" y="546.7" font-size="12.7" fill="#222" stroke="#222" stroke-width="0.32" text-anchor="middle" transform="translate(1346.7 0) scale(0.86 1) translate(-1346.7 0)">P</text>
<rect x="1194" y="650.8" width="118.4" height="117.9" fill="#95b7d1"/>
<rect x="1327.1" y="650.8" width="118.9" height="117.9" fill="#95b7d1"/>
<g stroke="#fff" stroke-width="1.1" stroke-opacity=".7">
<line x1="1194" y1="669.9" x2="1312.4" y2="669.9"/>
<line x1="1327.1" y1="669.9" x2="1445" y2="669.9"/>
<line x1="1194" y1="689.8" x2="1312.4" y2="689.8"/>
<line x1="1327.1" y1="689.8" x2="1445" y2="689.8"/>
<line x1="1194" y1="709.7" x2="1312.4" y2="709.7"/>
<line x1="1327.1" y1="709.7" x2="1445" y2="709.7"/>
<line x1="1194" y1="729.6" x2="1312.4" y2="729.6"/>
<line x1="1327.1" y1="729.6" x2="1445" y2="729.6"/>
<line x1="1194" y1="749.2" x2="1312.4" y2="749.2"/>
<line x1="1327.1" y1="749.2" x2="1445" y2="749.2"/>
<line x1="1366.5" y1="650.8" x2="1366.5" y2="768.7"/>
</g>
<text x="1236.6" y="664.9" font-size="12.7" fill="#222" stroke="#222" stroke-width="0.16" font-weight="bold" textLength="33.2" lengthAdjust="spacingAndGlyphs">Night</text>
<text x="1331.2" y="665.7" font-size="12.7" fill="#222" stroke="#222" stroke-width="0.16" font-weight="bold" textLength="32" lengthAdjust="spacingAndGlyphs">Code</text>
<text x="1410.9" y="664.9" font-size="12.7" fill="#222" stroke="#222" stroke-width="0.16" font-weight="bold" textLength="30.5" lengthAdjust="spacingAndGlyphs">Time</text>
<text x="1346.7" y="685.5" font-size="12.7" fill="#222" stroke="#222" stroke-width="0.32" text-anchor="middle" transform="translate(1346.7 0) scale(0.98 1) translate(-1346.7 0)">N</text>
<text x="1346.7" y="705.4" font-size="12.7" fill="#222" stroke="#222" stroke-width="0.32" text-anchor="middle" transform="translate(1346.7 0) scale(0.8 1) translate(-1346.7 0)">S</text>
<text x="1346.7" y="725.3" font-size="12.7" fill="#222" stroke="#222" stroke-width="0.32" text-anchor="middle" transform="translate(1346.7 0) scale(0.8 1) translate(-1346.7 0)">SS</text>
<rect x="1194" y="789.9" width="118.4" height="118.2" fill="#f2f2f2"/>
<rect x="1327.1" y="789.9" width="118.9" height="118.2" fill="#f2f2f2"/>
<g stroke="#fff" stroke-width="1.1" stroke-opacity=".7">
<line x1="1194" y1="808.8" x2="1312.4" y2="808.8"/>
<line x1="1327.1" y1="808.8" x2="1445" y2="808.8"/>
<line x1="1194" y1="828.6" x2="1312.4" y2="828.6"/>
<line x1="1327.1" y1="828.6" x2="1445" y2="828.6"/>
<line x1="1194" y1="848.7" x2="1312.4" y2="848.7"/>
<line x1="1327.1" y1="848.7" x2="1445" y2="848.7"/>
<line x1="1194" y1="868.5" x2="1312.4" y2="868.5"/>
<line x1="1327.1" y1="868.5" x2="1445" y2="868.5"/>
<line x1="1194" y1="888.3" x2="1312.4" y2="888.3"/>
<line x1="1327.1" y1="888.3" x2="1445" y2="888.3"/>
<line x1="1366.5" y1="789.9" x2="1366.5" y2="908.1"/>
</g>
<text x="1206.2" y="803.8" font-size="12.7" fill="#222" stroke="#222" stroke-width="0.16" font-weight="bold" textLength="95.2" lengthAdjust="spacingAndGlyphs">Non productive</text>
<text x="1331.2" y="804.6" font-size="12.7" fill="#222" stroke="#222" stroke-width="0.16" font-weight="bold" textLength="32" lengthAdjust="spacingAndGlyphs">Code</text>
<text x="1410.9" y="803.8" font-size="12.7" fill="#222" stroke="#222" stroke-width="0.16" font-weight="bold" textLength="30.5" lengthAdjust="spacingAndGlyphs">Time</text>
<rect x="1327.1" y="809.4" width="38.9" height="19.3" fill="#ffc94e"/>
<text x="1209.2" y="823.5" font-size="11.8" fill="#2a2a2a" stroke="#2a2a2a" stroke-width="0.32" textLength="88.7" lengthAdjust="spacingAndGlyphs">ROSTER DAY OFF</text>
<text x="1338.1" y="824.1" font-size="12.7" fill="#111" stroke="#111" stroke-width="0.16" font-weight="bold" textLength="17.3" lengthAdjust="spacingAndGlyphs">RD</text>
<rect x="1327.1" y="829.2" width="38.9" height="19.6" fill="#c3d97a"/>
<text x="1214.8" y="843.6" font-size="11.8" fill="#2a2a2a" stroke="#2a2a2a" stroke-width="0.32" textLength="77.1" lengthAdjust="spacingAndGlyphs">ANNUAL LEAVE</text>
<text x="1339" y="844.2" font-size="12.7" fill="#111" stroke="#111" stroke-width="0.16" font-weight="bold" textLength="15.5" lengthAdjust="spacingAndGlyphs">AL</text>
<rect x="1327.1" y="849.3" width="38.9" height="19.3" fill="#86b9a3"/>
<text x="1225.1" y="863.4" font-size="11.8" fill="#2a2a2a" stroke="#2a2a2a" stroke-width="0.32" textLength="57.8" lengthAdjust="spacingAndGlyphs">MAT LEAVE</text>
<text x="1337.2" y="864" font-size="12.7" fill="#111" stroke="#111" stroke-width="0.16" font-weight="bold" textLength="18.8" lengthAdjust="spacingAndGlyphs">ML</text>
<rect x="1327.1" y="869.1" width="38.9" height="19.3" fill="#4a9fd1"/>
<text x="1199" y="883.2" font-size="11.8" fill="#2a2a2a" stroke="#2a2a2a" stroke-width="0.32" textLength="109.6" lengthAdjust="spacingAndGlyphs">LONG SERVICE LEAVE</text>
<text x="1337.2" y="883.8" font-size="12.7" fill="#fff" stroke="#fff" stroke-width="0.16" font-weight="bold" textLength="18.8" lengthAdjust="spacingAndGlyphs">LSL</text>
<rect x="1327.1" y="888.9" width="38.9" height="19.3" fill="#265d8f"/>
<text x="1204.9" y="903" font-size="11.8" fill="#2a2a2a" stroke="#2a2a2a" stroke-width="0.32" textLength="96.9" lengthAdjust="spacingAndGlyphs">EDUCATION LEAVE</text>
<text x="1340.2" y="903.6" font-size="12.7" fill="#fff" stroke="#fff" stroke-width="0.16" font-weight="bold" textLength="13.4" lengthAdjust="spacingAndGlyphs">EL</text>
<rect x="0" y="0" width="1445" height="63.7" fill="#217346"/>
<g fill="#1e6a40" stroke="none">
<circle cx="1226.5" cy="11" r="3.4"/><circle cx="1283" cy="2" r="4.5"/><circle cx="1261" cy="32.6" r="2.4"/><circle cx="1312.5" cy="11" r="2.3"/><circle cx="1439" cy="5" r="2.6"/>
<circle cx="1305.3" cy="32" r="5.6"/><path d="M1301 36l-2.5 6.5M1304 37l-.8 7M1307 37l.8 7M1310 36l3 5.5" stroke="#1e6a40" stroke-width="2" fill="none"/>
<ellipse cx="1343" cy="17" rx="10" ry="7"/><path d="M1334 14c-3-3-3.5-8-2-12 1 3 3 5 5 6M1353 13c4-1 8-3 10-6 .5 4-2 9-7 10" /><path d="M1335 18l-9 -2.5M1335 21l-8 3M1351 21l7 6.5M1348 23l5 7" stroke="#1e6a40" stroke-width="1.6" fill="none"/>
<ellipse cx="1180.5" cy="31" rx="6" ry="3.6"/><path d="M1176 29l-4-6M1185 29l5-5M1175 32l-6 1M1186 33l5 4M1172 23l2-3M1190 24l2-2" stroke="#1e6a40" stroke-width="1.4" fill="none"/>
<ellipse cx="1402" cy="31" rx="24" ry="10"/><rect x="1392" y="16" width="14" height="8" rx="2"/><path d="M1420 26l9-6 0 22-9-6z"/><rect x="1396" y="5" width="2.4" height="12"/>
</g>
<g fill="#217346"><circle cx="1390.4" cy="29.8" r="3.2"/><circle cx="1400.2" cy="29.8" r="3.2"/><circle cx="1409.6" cy="29.8" r="3.2"/></g>
<text y="21.7" font-size="11.8" fill="#9fcbb1" stroke="#9fcbb1" stroke-width=".2" lengthAdjust="spacingAndGlyphs" xml:space="preserve"><tspan x="633.6" textLength="63">4 WEEK TUT</tspan><tspan x="697.4" textLength="10.6"> - </tspan><tspan x="708.2" textLength="54.8">Copy.xlsm</tspan><tspan x="763.4" textLength="16.6">  -  </tspan><tspan x="780.2" textLength="25.6">Excel</tspan></text>
<text x="1377.2" y="20.9" font-size="11.6" fill="#a6cdb7" stroke="#a6cdb7" stroke-width="0.2" textLength="68.6" lengthAdjust="spacingAndGlyphs">Excelerate AU</text>
<text x="7.6" y="52.7" font-size="12.2" fill="#f4f8f5" stroke="#f4f8f5" stroke-width="0.15" textLength="65.1" lengthAdjust="spacingAndGlyphs">Page Layout</text>
<text x="98.9" y="52.7" font-size="12.2" fill="#f4f8f5" stroke="#f4f8f5" stroke-width="0.15" textLength="49" lengthAdjust="spacingAndGlyphs">Formulas</text>
<text x="174.5" y="52.7" font-size="12.2" fill="#f4f8f5" stroke="#f4f8f5" stroke-width="0.15" textLength="23.9" lengthAdjust="spacingAndGlyphs">Data</text>
<text x="225" y="52.7" font-size="12.2" fill="#f4f8f5" stroke="#f4f8f5" stroke-width="0.15" textLength="37" lengthAdjust="spacingAndGlyphs">Review</text>
<text x="288.3" y="52.7" font-size="12.2" fill="#f4f8f5" stroke="#f4f8f5" stroke-width="0.15" textLength="25.2" lengthAdjust="spacingAndGlyphs">View</text>
<text x="340.4" y="52.7" font-size="12.2" fill="#f4f8f5" stroke="#f4f8f5" stroke-width="0.15" textLength="52.5" lengthAdjust="spacingAndGlyphs">Developer</text>
<text x="419.8" y="52.7" font-size="12.2" fill="#f4f8f5" stroke="#f4f8f5" stroke-width="0.15" textLength="24.9" lengthAdjust="spacingAndGlyphs">Help</text>
<text x="471" y="52.7" font-size="12.2" fill="#f4f8f5" stroke="#f4f8f5" stroke-width="0.15" textLength="41.8" lengthAdjust="spacingAndGlyphs">Acrobat</text>
<text x="539.9" y="52.7" font-size="12.2" fill="#f4f8f5" stroke="#f4f8f5" stroke-width="0.15" textLength="63.1" lengthAdjust="spacingAndGlyphs">Power Pivot</text>
<text x="658.5" y="52.7" font-size="12.2" fill="#f4f8f5" stroke="#f4f8f5" stroke-width="0.15" textLength="149.5" lengthAdjust="spacingAndGlyphs">Tell me what you want to do</text>
<g fill="none" stroke="#fff" stroke-width="1.1"><path d="M636.2 53.2c0-2.6-2.6-3.6-2.6-6.7a4.95 4.95 0 0 1 9.9 0c0 3.1-2.6 4.1-2.6 6.7z"/><path d="M636.4 55.2h4.4M637.2 57h2.8"/></g>
<rect x="0" y="63.7" width="1445" height="90.9" fill="#f3f3f3"/>
<rect x="0" y="154.6" width="1445" height="44.4" fill="#e6e6e6"/>
<line x1="0" y1="154.7" x2="1445" y2="154.7" stroke="#dcdcdc" stroke-width="1"/>
<rect x="-2" y="166.3" width="12.9" height="24.2" fill="#fff" stroke="#d3d3d3" stroke-width="1.5"/>
<rect x="14.9" y="166.3" width="1432.1" height="24.2" fill="#fff" stroke="#d3d3d3" stroke-width="1.5"/>
<rect x="0" y="974.6" width="1445" height="27.7" fill="#e6e6e6"/>
<line x1="0" y1="974.6" x2="1445" y2="974.6" stroke="#ababab" stroke-width="1.3"/>
<line x1="0" y1="1002.3" x2="1445" y2="1002.3" stroke="#d4d4d4" stroke-width="1"/>
<rect x="0" y="977.3" width="18.7" height="21.9" fill="#ffff00"/>
<rect x="23.3" y="977.3" width="128.5" height="21.9" fill="#ffff00"/>
<rect x="156.4" y="977.3" width="56.2" height="21.9" fill="#ffff00"/>
<line x1="20.9" y1="977.6" x2="20.9" y2="997.6" stroke="#ababab" stroke-width="1.3"/>
<line x1="154" y1="977.6" x2="154" y2="997.6" stroke="#ababab" stroke-width="1.3"/>
<text x="-0.9" y="992.2" font-size="12.3" fill="#444" stroke="#444" stroke-width="0.32" textLength="5.9" lengthAdjust="spacingAndGlyphs">2</text>
<text x="35.3" y="992.2" font-size="12.3" fill="#444" stroke="#444" stroke-width="0.32" textLength="103.5" lengthAdjust="spacingAndGlyphs">Protected Version</text>
<text x="166.4" y="992.2" font-size="12.3" fill="#444" stroke="#444" stroke-width="0.32" textLength="35.4" lengthAdjust="spacingAndGlyphs">Demo</text>
<rect x="214.6" y="973.6" width="97.4" height="24.8" fill="#fff"/>
<line x1="214.6" y1="974.3" x2="214.6" y2="998" stroke="#ababab" stroke-width="1.2"/>
<line x1="312" y1="974.3" x2="312" y2="998" stroke="#ababab" stroke-width="1.2"/>
<rect x="214.4" y="997.3" width="97.9" height="2" fill="#217346"/>
<text x="225.9" y="992.2" font-size="12.3" fill="#217346" stroke="#217346" stroke-width="0.16" font-weight="bold" textLength="74.4" lengthAdjust="spacingAndGlyphs">roster demo</text>
<circle cx="352.9" cy="988.1" r="7.6" fill="none" stroke="#8e8e8e" stroke-width="1.1"/>
<path d="M348.7 988.1h8.4M352.9 983.9v8.4" fill="none" stroke="#7a7a7a" stroke-width="1.3"/>
<g fill="#9a9a9a"><rect x="910.4" y="983.5" width="1.5" height="1.5"/><rect x="910.4" y="987.5" width="1.5" height="1.5"/><rect x="910.4" y="991.6" width="1.5" height="1.5"/></g>
<rect x="927.2" y="981.2" width="14.6" height="14.7" fill="#fff" stroke="#ababab" stroke-width="1"/>
<path d="M937.2 984.6v7.6l-5-3.8z" fill="#222"/>
<rect x="942.4" y="981" width="14.6" height="15.2" fill="#f0f0f0"/>
<rect x="957.4" y="981.3" width="489.6" height="14.4" fill="#fff" stroke="#ababab" stroke-width="1.2"/>
<rect x="0" y="1002.8" width="1445" height="20.8" fill="#f3f3f3"/>
<rect x="1374.8" y="1002.8" width="39.8" height="20.8" fill="#c6c6c6"/>
<rect x="0" y="1023.6" width="1445" height="1.4" fill="#3b3f52"/>
<text x="-3.6" y="1017.3" font-size="12.4" fill="#444" stroke="#444" stroke-width="0.32">e</text>
<g fill="none" stroke="#666" stroke-width="1.1">
<rect x="1388.3" y="1006.9" width="12.3" height="11.6"/><path d="M1392.4 1006.9v11.6M1396.5 1006.9v11.6M1388.3 1010.8h12.3M1388.3 1014.7h12.3"/>
<rect x="1427.9" y="1006.9" width="13.2" height="11.6"/><rect x="1431.4" y="1008.9" width="6.4" height="7.8"/><path d="M1433 1011h3.4M1433 1012.9h3.4M1433 1014.8h3.4" stroke-width=".9"/>
</g>
<rect x="-3" y="74.7" width="62.5" height="21.5" fill="#fff" stroke="#a6a6a6" stroke-width="1.3"/>
<path d="M50.2 84h5.2l-2.6 2.8z" fill="#555"/>
<rect x="62.7" y="74.7" width="41.6" height="21.5" fill="#fff" stroke="#a6a6a6" stroke-width="1.3"/>
<text x="65.8" y="90.1" font-size="12.6" fill="#444" stroke="#444" stroke-width="0.32" textLength="10.6" lengthAdjust="spacingAndGlyphs">11</text>
<path d="M94.7 84h5.2l-2.6 2.8z" fill="#555"/>
<text x="112.9" y="91" font-size="13.2" fill="#444" stroke="#444" stroke-width="0.32" textLength="10.1" lengthAdjust="spacingAndGlyphs">A</text>
<path d="M120.9 81.4l2.600-3.200 2.600 3.200z" fill="#4a86c5"/>
<text x="137.4" y="91" font-size="10.6" fill="#444" stroke="#444" stroke-width="0.32" textLength="8.2" lengthAdjust="spacingAndGlyphs">A</text>
<path d="M144.5 78.3h5.300l-2.650 3.200z" fill="#4a86c5"/>
<line x1="-1" y1="121.9" x2="1.2" y2="121.9" stroke="#555" stroke-width="1.2"/>
<path d="M11.4 114.8 L14.2 117.6 L17 114.8" fill="none" stroke="#444" stroke-width="1.3"/>
<line x1="26.6" y1="106.5" x2="26.6" y2="126.1" stroke="#cfcfcf" stroke-width="1.3"/>
<rect x="35.6" y="109.2" width="12.7" height="12.2" fill="#fff"/>
<g fill="none" stroke="#c2c2c2" stroke-width="1"><path d="M35.6 109.2h12.7M35.6 109.2v12.2M48.3 109.2v12.2M41.95 109.2v12.2M35.6 115.3h12.7"/></g>
<line x1="35.2" y1="121.4" x2="48.7" y2="121.4" stroke="#8e8e8e" stroke-width="1.1"/>
<path d="M56.9 114.8 L59.7 117.6 L62.5 114.8" fill="none" stroke="#444" stroke-width="1.3"/>
<line x1="72.4" y1="106.5" x2="72.4" y2="126.1" stroke="#cfcfcf" stroke-width="1.3"/>
<g fill="#fff" stroke="#6e6e6e" stroke-width="1.1" stroke-linejoin="round"><path d="M82.7 115.3l5.3-5.3 5.5 5-5.5 4.6z"/><path d="M86 111.6v-3.2h2.6v3.4" fill="none"/></g>
<path d="M93.2 112.4c2.6 1.4 3.4 3.8 2.4 6-.6-1.400-1.400-2.300-2.900-2.800z" fill="#4a86c5"/>
<rect x="80.6" y="120.6" width="15" height="2.9" fill="#fff" stroke="#9a9a9a" stroke-width="1"/>
<path d="M102.6 114.8 L105.4 117.6 L108.2 114.8" fill="none" stroke="#444" stroke-width="1.3"/>
<text x="122.2" y="119.3" font-size="12.8" fill="#5a5a5a" stroke="#5a5a5a" stroke-width="0.8" textLength="9.8" lengthAdjust="spacingAndGlyphs">A</text>
<rect x="118.8" y="120" width="15.8" height="3.8" fill="#f00"/>
<path d="M141.1 114.8 L143.9 117.6 L146.7 114.8" fill="none" stroke="#444" stroke-width="1.3"/>
<text x="24.3" y="150.6" font-size="11.3" fill="#444" stroke="#444" stroke-width="0.32" textLength="24.2" lengthAdjust="spacingAndGlyphs">Font</text>
<path d="M154.4 142.8h-6.4v6.4" fill="none" stroke="#6a6a6a" stroke-width="1"/>
<path d="M150.5 145.3l5.2 5.2M155.9 150.7v-3.6M155.9 150.7h-3.6" fill="none" stroke="#6a6a6a" stroke-width="1"/>
<line x1="160.1" y1="67.4" x2="160.1" y2="150.4" stroke="#b0b0b0" stroke-width="1.3"/>
<line x1="172.3" y1="77.3" x2="186.3" y2="77.3" stroke="#777" stroke-width="1.1"/>
<line x1="172.3" y1="80.5" x2="186.3" y2="80.5" stroke="#777" stroke-width="1.1"/>
<line x1="172.3" y1="83.6" x2="186.3" y2="83.6" stroke="#777" stroke-width="1.1"/>
<line x1="196.2" y1="81.2" x2="210" y2="81.2" stroke="#777" stroke-width="1.1"/>
<line x1="196.2" y1="84.4" x2="210" y2="84.4" stroke="#777" stroke-width="1.1"/>
<line x1="196.2" y1="87.5" x2="210" y2="87.5" stroke="#777" stroke-width="1.1"/>
<rect x="216.4" y="74.6" width="21.2" height="21.8" fill="#c8c8c8" stroke="#a8a8a8" stroke-width="1"/>
<line x1="220.2" y1="86.4" x2="233.9" y2="86.4" stroke="#7a7a7a" stroke-width="1.1"/>
<line x1="220.2" y1="89.4" x2="233.9" y2="89.4" stroke="#7a7a7a" stroke-width="1.1"/>
<line x1="220.2" y1="92.5" x2="233.9" y2="92.5" stroke="#7a7a7a" stroke-width="1.1"/>
<line x1="242.2" y1="75.6" x2="242.2" y2="95.6" stroke="#cfcfcf" stroke-width="1.3"/>
<g transform="rotate(-45 256 83.6)"><text x="248.6" y="86.6" font-size="11.4" fill="#6a6a6a" stroke="#6a6a6a" stroke-width=".5" textLength="13.4" lengthAdjust="spacingAndGlyphs">ab</text></g>
<path d="M256.4 91.6l8.600-8.600" fill="none" stroke="#6a6a6a" stroke-width="1.2"/>
<path d="M265.8 82.2l-.4 3-2.600-2.600z" fill="#6a6a6a"/>
<path d="M270.2 84 L273 86.8 L275.8 84" fill="none" stroke="#444" stroke-width="1.3"/>
<line x1="296.9" y1="73.3" x2="296.9" y2="127.2" stroke="#cfcfcf" stroke-width="1.3"/>
<line x1="172.3" y1="111.2" x2="186.3" y2="111.2" stroke="#777" stroke-width="1.1"/>
<line x1="196.2" y1="111.2" x2="210" y2="111.2" stroke="#777" stroke-width="1.1"/>
<line x1="220.2" y1="111.2" x2="233.9" y2="111.2" stroke="#777" stroke-width="1.1"/>
<line x1="172.3" y1="114.2" x2="182.2" y2="114.2" stroke="#777" stroke-width="1.1"/>
<line x1="198.4" y1="114.2" x2="207.8" y2="114.2" stroke="#777" stroke-width="1.1"/>
<line x1="224.2" y1="114.2" x2="233.9" y2="114.2" stroke="#777" stroke-width="1.1"/>
<line x1="172.3" y1="117.3" x2="186.3" y2="117.3" stroke="#777" stroke-width="1.1"/>
<line x1="196.2" y1="117.3" x2="210" y2="117.3" stroke="#777" stroke-width="1.1"/>
<line x1="220.2" y1="117.3" x2="233.9" y2="117.3" stroke="#777" stroke-width="1.1"/>
<line x1="172.3" y1="120.3" x2="182.2" y2="120.3" stroke="#777" stroke-width="1.1"/>
<line x1="198.4" y1="120.3" x2="207.8" y2="120.3" stroke="#777" stroke-width="1.1"/>
<line x1="224.2" y1="120.3" x2="233.9" y2="120.3" stroke="#777" stroke-width="1.1"/>
<line x1="242.2" y1="106" x2="242.2" y2="126" stroke="#cfcfcf" stroke-width="1.3"/>
<line x1="249.8" y1="109.3" x2="265.8" y2="109.3" stroke="#777" stroke-width="1.1"/>
<line x1="249.8" y1="121.2" x2="265.8" y2="121.2" stroke="#777" stroke-width="1.1"/>
<line x1="258" y1="112.3" x2="265.8" y2="112.3" stroke="#777" stroke-width="1.1"/>
<line x1="258" y1="115.3" x2="265.8" y2="115.3" stroke="#777" stroke-width="1.1"/>
<line x1="258" y1="118.2" x2="265.8" y2="118.2" stroke="#777" stroke-width="1.1"/>
<line x1="273.7" y1="109.3" x2="289.7" y2="109.3" stroke="#777" stroke-width="1.1"/>
<line x1="273.7" y1="121.2" x2="289.7" y2="121.2" stroke="#777" stroke-width="1.1"/>
<line x1="281.9" y1="112.3" x2="289.7" y2="112.3" stroke="#777" stroke-width="1.1"/>
<line x1="281.9" y1="115.3" x2="289.7" y2="115.3" stroke="#777" stroke-width="1.1"/>
<line x1="281.9" y1="118.2" x2="289.7" y2="118.2" stroke="#777" stroke-width="1.1"/>
<path d="M256.8 115.3h-6.2M253.4 112.4l-3 2.9 3 2.9" fill="none" stroke="#4a86c5" stroke-width="1.5"/>
<path d="M274.2 115.3h6.2M277.6 112.4l3 2.9-3 2.9" fill="none" stroke="#4a86c5" stroke-width="1.5"/>
<g font-size="10" fill="#6a6a6a" stroke="#6a6a6a" stroke-width=".5"><text x="306.2" y="84.5" textLength="11.8" lengthAdjust="spacingAndGlyphs">ab</text><text x="306.2" y="92.2" font-size="10.6">c</text></g>
<path d="M317.2 87.600v1.800h-3.200M315.4 88l-1.600 1.400 1.600 1.400" fill="none" stroke="#4a86c5" stroke-width="1.1"/>
<text x="323.3" y="90" font-size="11.9" fill="#444" stroke="#444" stroke-width="0.32" textLength="52.1" lengthAdjust="spacingAndGlyphs">Wrap Text</text>
<g fill="none" stroke="#7a7a7a" stroke-width="1"><rect x="304.7" y="108.3" width="14.6" height="14.2" fill="#fff"/><path d="M304.7 111.5h14.6M304.7 119.3h14.6M312 108.3v3.2M312 119.3v3.2"/></g>
<path d="M307.400 115.4h9.200" fill="none" stroke="#4a86c5" stroke-width="1.3"/>
<circle cx="307.6" cy="115.4" r="1.2" fill="#4a86c5"/><circle cx="316.4" cy="115.4" r="1.2" fill="#4a86c5"/>
<text x="323.3" y="120.6" font-size="11.9" fill="#444" stroke="#444" stroke-width="0.32" textLength="84.7" lengthAdjust="spacingAndGlyphs">Merge &amp; Center</text>
<path d="M423.2 114.8 L426 117.6 L428.8 114.8" fill="none" stroke="#444" stroke-width="1.3"/>
<text x="268.3" y="150.6" font-size="11.3" fill="#444" stroke="#444" stroke-width="0.32" textLength="53.2" lengthAdjust="spacingAndGlyphs">Alignment</text>
<path d="M440.4 142.8h-6.4v6.4" fill="none" stroke="#6a6a6a" stroke-width="1"/>
<path d="M436.5 145.3l5.2 5.2M441.9 150.7v-3.6M441.9 150.7h-3.6" fill="none" stroke="#6a6a6a" stroke-width="1"/>
<line x1="446.1" y1="67.4" x2="446.1" y2="150.4" stroke="#b0b0b0" stroke-width="1.3"/>
<rect x="454.7" y="74.7" width="138.6" height="21.5" fill="#fff" stroke="#a6a6a6" stroke-width="1.3"/>
<text x="457.4" y="89.9" font-size="12.6" fill="#444" stroke="#444" stroke-width="0.32" textLength="40" lengthAdjust="spacingAndGlyphs">General</text>
<path d="M583.1 84.2h5.2l-2.6 2.8z" fill="#555"/>
<text x="461.6" y="120.8" font-size="14.4" fill="#555" stroke="#555" stroke-width="0.32" textLength="8.4" lengthAdjust="spacingAndGlyphs">$</text>
<path d="M479.9 114.8 L482.7 117.6 L485.5 114.8" fill="none" stroke="#444" stroke-width="1.3"/>
<text x="498" y="121.6" font-size="13.6" fill="#555" stroke="#555" stroke-width="0.32" textLength="13" lengthAdjust="spacingAndGlyphs">%</text>
<text x="524.4" y="116.6" font-size="17" fill="#555" stroke="#555" stroke-width="0.16" font-weight="bold">,</text>
<line x1="543.3" y1="106" x2="543.3" y2="126" stroke="#cfcfcf" stroke-width="1.3"/>
<g font-size="8" fill="#666"><text x="557.6" y="115.0" textLength="7.4" lengthAdjust="spacingAndGlyphs">.0</text><text x="552.8" y="122.0" textLength="12.2" lengthAdjust="spacingAndGlyphs">.00</text><text x="576.6" y="115.0" textLength="12.2" lengthAdjust="spacingAndGlyphs">.00</text><text x="581.4" y="122.0" textLength="7.4" lengthAdjust="spacingAndGlyphs">.0</text></g>
<path d="M556.8 112.2h-5.6M553.6 110l-2.4 2.2 2.4 2.2" fill="none" stroke="#4a86c5" stroke-width="1.3"/>
<path d="M574.6 119.6h5.6M577.8 117.4l2.4 2.2-2.4 2.2" fill="none" stroke="#4a86c5" stroke-width="1.3"/>
<text x="495.2" y="150.6" font-size="11.3" fill="#444" stroke="#444" stroke-width="0.32" textLength="40.8" lengthAdjust="spacingAndGlyphs">Number</text>
<path d="M595.8 142.8h-6.4v6.4" fill="none" stroke="#6a6a6a" stroke-width="1"/>
<path d="M591.9 145.3l5.2 5.2M597.3 150.7v-3.6M597.3 150.7h-3.6" fill="none" stroke="#6a6a6a" stroke-width="1"/>
<line x1="600.9" y1="67.4" x2="600.9" y2="150.4" stroke="#b0b0b0" stroke-width="1.3"/>
<rect x="632.6" y="71.5" width="27" height="24.1" fill="#fff" stroke="#b0b0b0" stroke-width="1"/>
<path d="M639.4 71.5v24M646.2 71.5v24M653 71.5v24M632.6 77.5h27M632.6 83.6h27M632.6 89.6h27" fill="none" stroke="#b8b8b8" stroke-width="1"/>
<rect x="640" y="72.1" width="5.8" height="5" fill="#e0603c"/>
<rect x="640" y="78.1" width="10.8" height="5" fill="#4a86c5"/>
<rect x="640" y="84.2" width="8.8" height="4.9" fill="#e0603c"/>
<rect x="640" y="90.1" width="3.8" height="5.1" fill="#4a86c5"/>
<rect x="646.5" y="88.6" width="14.9" height="11.7" fill="#fff" stroke="#9a9a9a" stroke-width="1"/>
<path d="M650.4 92.8h7M650.4 96h7M656.4 90.8l-4.6 7.4" fill="none" stroke="#555" stroke-width="1"/>
<text x="615.2" y="115.9" font-size="11.9" fill="#444" stroke="#444" stroke-width="0.32" textLength="61.6" lengthAdjust="spacingAndGlyphs">Conditional</text>
<text x="611.3" y="131.8" font-size="11.9" fill="#444" stroke="#444" stroke-width="0.32" textLength="58.9" lengthAdjust="spacingAndGlyphs">Formatting</text>
<path d="M673.6 126 L676.4 128.8 L679.2 126" fill="none" stroke="#444" stroke-width="1.3"/>
<rect x="699.2" y="73.8" width="24.2" height="19.2" fill="#fff" stroke="#b0b0b0" stroke-width="1"/>
<rect x="705.4" y="78.8" width="17.5" height="13.7" fill="#bcd3ec"/>
<path d="M705.2 73.8v19.2M711.3 73.8v19.2M717.4 73.8v19.2M699.2 78.6h24.2M699.2 83.4h24.2M699.2 88.2h24.2" fill="none" stroke="#c6c6c6" stroke-width="1"/>
<path d="M727.2 79.4l.6 3.6-7.2 8.6-2.6-2.2z" fill="#8a8a8a"/>
<path d="M717.6 89.4l2.8 2.4-1.4 1.6-2.8-2.4z" fill="#666"/>
<path d="M705.6 100.6c4 .4 9.4-.2 12-3.2 1.6-1.8 1.6-4.2-.2-5.4-1.8-1.2-4.2-.6-5.6 1.4-1.6 2.4-3.6 5.6-6.2 7.2z" fill="#4a86c5"/>
<path d="M714.6 93.4c1.4-.6 2.6.4 2.6 1.8" fill="none" stroke="#fff" stroke-width="1"/>
<text x="685.7" y="115.9" font-size="11.9" fill="#444" stroke="#444" stroke-width="0.32" textLength="51.9" lengthAdjust="spacingAndGlyphs">Format as</text>
<text x="692.9" y="131.8" font-size="11.9" fill="#444" stroke="#444" stroke-width="0.32" textLength="27.7" lengthAdjust="spacingAndGlyphs">Table</text>
<path d="M724.2 126 L727 128.8 L729.8 126" fill="none" stroke="#444" stroke-width="1.3"/>
<rect x="741.8" y="69.8" width="318.6" height="60.2" fill="#fff" stroke="#e1e1e1" stroke-width="1"/>
<rect x="744.6" y="73.2" width="103.2" height="25.6" fill="#fff" stroke="#a6a6a6" stroke-width="2"/>
<text x="750.2" y="89.8" font-size="12.5" fill="#1e1e1e" stroke="#1e1e1e" stroke-width="0.32" textLength="45.4" lengthAdjust="spacingAndGlyphs">Normal</text>
<rect x="851.4" y="75.3" width="99.5" height="21.4" fill="#ffc7ce"/>
<text x="855.4" y="89.8" font-size="12.5" fill="#9c0006" stroke="#9c0006" stroke-width="0.32" textLength="22.8" lengthAdjust="spacingAndGlyphs">Bad</text>
<rect x="956.7" y="75.3" width="99.4" height="21.4" fill="#c6efce"/>
<text x="960.4" y="89.8" font-size="12.5" fill="#006100" stroke="#006100" stroke-width="0.32" textLength="33.3" lengthAdjust="spacingAndGlyphs">Good</text>
<rect x="746.3" y="103" width="99.3" height="21.4" fill="#ffeb9c"/>
<text x="750.2" y="117.6" font-size="12.5" fill="#9c5700" stroke="#9c5700" stroke-width="0.32" textLength="46.5" lengthAdjust="spacingAndGlyphs">Neutral</text>
<rect x="851.9" y="103.5" width="98.5" height="20.5" fill="#f2f2f2" stroke="#7f7f7f" stroke-width="1"/>
<text x="855.4" y="117.6" font-size="12.5" fill="#fa7d00" stroke="#fa7d00" stroke-width="0.16" font-weight="bold" textLength="68.3" lengthAdjust="spacingAndGlyphs">Calculation</text>
<rect x="957.2" y="103.5" width="98.4" height="20.7" fill="#a5a5a5" stroke="#4a4a4a" stroke-width="1"/>
<rect x="959" y="105.3" width="94.8" height="17.1" fill="none" stroke="#4a4a4a" stroke-width="1"/>
<text x="960.7" y="117.6" font-size="12.5" fill="#fff" stroke="#fff" stroke-width="0.16" font-weight="bold" textLength="63.9" lengthAdjust="spacingAndGlyphs">Check Cell</text>
<rect x="1060.6" y="69.8" width="23" height="60.2" fill="#f3f3f3" stroke="#ababab" stroke-width="1"/>
<line x1="1068" y1="95.9" x2="1075.2" y2="95.9" stroke="#555" stroke-width="1.1"/>
<path d="M1068.4 98.5 L1071.6 101.7 L1074.8 98.5" fill="none" stroke="#555" stroke-width="1.3"/>
<text x="832.6" y="150.6" font-size="11.3" fill="#444" stroke="#444" stroke-width="0.32" textLength="28.9" lengthAdjust="spacingAndGlyphs">Styles</text>
<line x1="1094.4" y1="67.4" x2="1094.4" y2="150.4" stroke="#b0b0b0" stroke-width="1.3"/>
<rect x="1110.9" y="71.3" width="15" height="5.8" fill="#fff" stroke="#8a8a8a" stroke-width="1"/>
<line x1="1118.4" y1="71.3" x2="1118.4" y2="77.1" stroke="#8a8a8a" stroke-width="1"/>
<rect x="1121.8" y="79.5" width="14.8" height="5.4" fill="#bcd3ec" stroke="#9ab4d2" stroke-width="1"/>
<line x1="1129.2" y1="79.5" x2="1129.2" y2="84.9" stroke="#9ab4d2" stroke-width="1"/>
<path d="M1118.9 82.2h-6.6M1115.4 79.4l-3 2.8 3 2.8" fill="none" stroke="#4a86c5" stroke-width="1.6"/>
<rect x="1110.9" y="87.7" width="15" height="10.2" fill="#fff" stroke="#8a8a8a" stroke-width="1"/>
<path d="M1118.4 87.7v10.2M1110.9 92.8h15" fill="none" stroke="#8a8a8a" stroke-width="1"/>
<text x="1108.5" y="116" font-size="11.9" fill="#444" stroke="#444" stroke-width="0.32" textLength="29.1" lengthAdjust="spacingAndGlyphs">Insert</text>
<path d="M1120.2 126 L1123 128.8 L1125.8 126" fill="none" stroke="#444" stroke-width="1.3"/>
<rect x="1151.3" y="71.3" width="15" height="5.8" fill="#fff" stroke="#8a8a8a" stroke-width="1"/>
<line x1="1158.8" y1="71.3" x2="1158.8" y2="77.1" stroke="#8a8a8a" stroke-width="1"/>
<rect x="1157.4" y="79.5" width="11.4" height="5.4" fill="#bcd3ec" stroke="#9ab4d2" stroke-width="1"/>
<rect x="1151.3" y="88.4" width="15" height="10.2" fill="#fff" stroke="#8a8a8a" stroke-width="1"/>
<path d="M1158.8 88.4v10.2M1151.3 93.5h15" fill="none" stroke="#8a8a8a" stroke-width="1"/>
<path d="M1166.6 77.2l13.6 12M1180.2 77l-13.8 12.6" fill="none" stroke="#e0603c" stroke-width="1.9"/>
<text x="1148.5" y="116" font-size="11.9" fill="#444" stroke="#444" stroke-width="0.32" textLength="33" lengthAdjust="spacingAndGlyphs">Delete</text>
<path d="M1161.9 126 L1164.7 128.8 L1167.5 126" fill="none" stroke="#444" stroke-width="1.3"/>
<path d="M1194.2 72.6h25.6M1196.8 70.6l-2.6 2 2.6 2M1217.2 70.6l2.6 2-2.6 2M1193.3 70.2v4.8M1220.7 70.2v4.8" fill="none" stroke="#4a86c5" stroke-width="1"/>
<rect x="1193.5" y="76.7" width="27.1" height="19.5" fill="#fff" stroke="#a0a0a0" stroke-width="1"/>
<path d="M1201 76.700v19.5M1208.300 76.700v19.5M1215.600 76.700v19.500M1193.5 81.8h27.100M1193.500 91.4h27.100" fill="none" stroke="#c0c0c0" stroke-width="1"/>
<rect x="1201.2" y="82.2" width="6.9" height="8.9" fill="#4a86c5"/>
<path d="M1194 96.4v2.2c0 1.600 7.600 1.600 7.600 0v-2.200M1202.800 96.4v2.200c0 1.600 7.600 1.600 7.600 0v-2.200" fill="none" stroke="#a0a0a0" stroke-width="1"/>
<text x="1188.3" y="116" font-size="11.9" fill="#444" stroke="#444" stroke-width="0.32" textLength="38.2" lengthAdjust="spacingAndGlyphs">Format</text>
<path d="M1203.7 126 L1206.5 128.8 L1209.3 126" fill="none" stroke="#444" stroke-width="1.3"/>
<text x="1153.5" y="150.6" font-size="11.3" fill="#444" stroke="#444" stroke-width="0.32" textLength="23.8" lengthAdjust="spacingAndGlyphs">Cells</text>
<line x1="1236.4" y1="67.4" x2="1236.4" y2="150.4" stroke="#b0b0b0" stroke-width="1.3"/>
<path d="M1261.9 73v-2.600h-12.600l6.600 6.300-6.600 6.300h12.600v-2.600" fill="none" stroke="#444" stroke-width="1.9"/>
<text x="1266.3" y="82.1" font-size="11.9" fill="#444" stroke="#444" stroke-width="0.32" textLength="50.2" lengthAdjust="spacingAndGlyphs">AutoSum</text>
<path d="M1331.7 76.5 L1334.5 79.3 L1337.3 76.5" fill="none" stroke="#444" stroke-width="1.3"/>
<rect x="1249.2" y="93.4" width="13.2" height="13.9" fill="#fff" stroke="#8a8a8a" stroke-width="1"/>
<rect x="1248.7" y="92.3" width="14.2" height="2.9" fill="#7a7a7a"/>
<path d="M1255.800 97.2v7.400M1252.600 101.6l3.200 3.200 3.200-3.200" fill="none" stroke="#4a86c5" stroke-width="1.5"/>
<text x="1266.5" y="104.5" font-size="11.9" fill="#444" stroke="#444" stroke-width="0.32" textLength="15.2" lengthAdjust="spacingAndGlyphs">Fill</text>
<path d="M1285.2 98.9 L1288 101.7 L1290.8 98.9" fill="none" stroke="#444" stroke-width="1.3"/>
<path d="M1257.6 116.200l4.200 4.200-8.600 7.400-4.200-4.200z" fill="#ec8fa4"/>
<path d="M1250.800 121.800l4.200 4.200" fill="none" stroke="#f8cdd6" stroke-width="1"/>
<text x="1266.5" y="127.7" font-size="11.9" fill="#444" stroke="#444" stroke-width="0.32" textLength="27.2" lengthAdjust="spacingAndGlyphs">Clear</text>
<path d="M1297 122 L1299.8 124.8 L1302.6 122" fill="none" stroke="#444" stroke-width="1.3"/>
<text x="1352.9" y="83.9" font-size="16" fill="#4a86c5" stroke="#4a86c5" stroke-width="0.7" textLength="11.6" lengthAdjust="spacingAndGlyphs">A</text>
<text x="1353.5" y="97.8" font-size="15.4" fill="#a864c8" stroke="#a864c8" stroke-width="0.7" textLength="10.6" lengthAdjust="spacingAndGlyphs">Z</text>
<path d="M1365.100 79.4h16.800l-6.600 6.200v8h-3.600v-8z" fill="#808080"/>
<path d="M1374.200 87.4v5.400" fill="none" stroke="#e6e6e6" stroke-width="1"/>
<text x="1350.7" y="115.9" font-size="11.9" fill="#444" stroke="#444" stroke-width="0.32" textLength="34.1" lengthAdjust="spacingAndGlyphs">Sort &amp;</text>
<text x="1349" y="131.8" font-size="11.9" fill="#444" stroke="#444" stroke-width="0.32" textLength="25.8" lengthAdjust="spacingAndGlyphs">Filter</text>
<path d="M1378.3 126 L1381.1 128.8 L1383.9 126" fill="none" stroke="#444" stroke-width="1.3"/>
<circle cx="1414.4" cy="81.1" r="8.9" fill="#fff" stroke="#4a86c5" stroke-width="2.2"/>
<path d="M1407.6 88.2l-7.6 7.4" fill="none" stroke="#4a86c5" stroke-width="3.4" stroke-linecap="round"/>
<text x="1393.5" y="115.9" font-size="11.9" fill="#444" stroke="#444" stroke-width="0.32" textLength="36.3" lengthAdjust="spacingAndGlyphs">Find &amp;</text>
<text x="1390.7" y="131.8" font-size="11.9" fill="#444" stroke="#444" stroke-width="0.32" textLength="30.8" lengthAdjust="spacingAndGlyphs">Select</text>
<path d="M1425.2 126 L1428 128.8 L1430.8 126" fill="none" stroke="#444" stroke-width="1.3"/>
<text x="1321.3" y="150.6" font-size="11.3" fill="#444" stroke="#444" stroke-width="0.32" textLength="36.9" lengthAdjust="spacingAndGlyphs">Editing</text>
<line x1="1442.8" y1="67.4" x2="1442.8" y2="150.4" stroke="#b0b0b0" stroke-width="1.3"/>
</svg>
</body></html>
